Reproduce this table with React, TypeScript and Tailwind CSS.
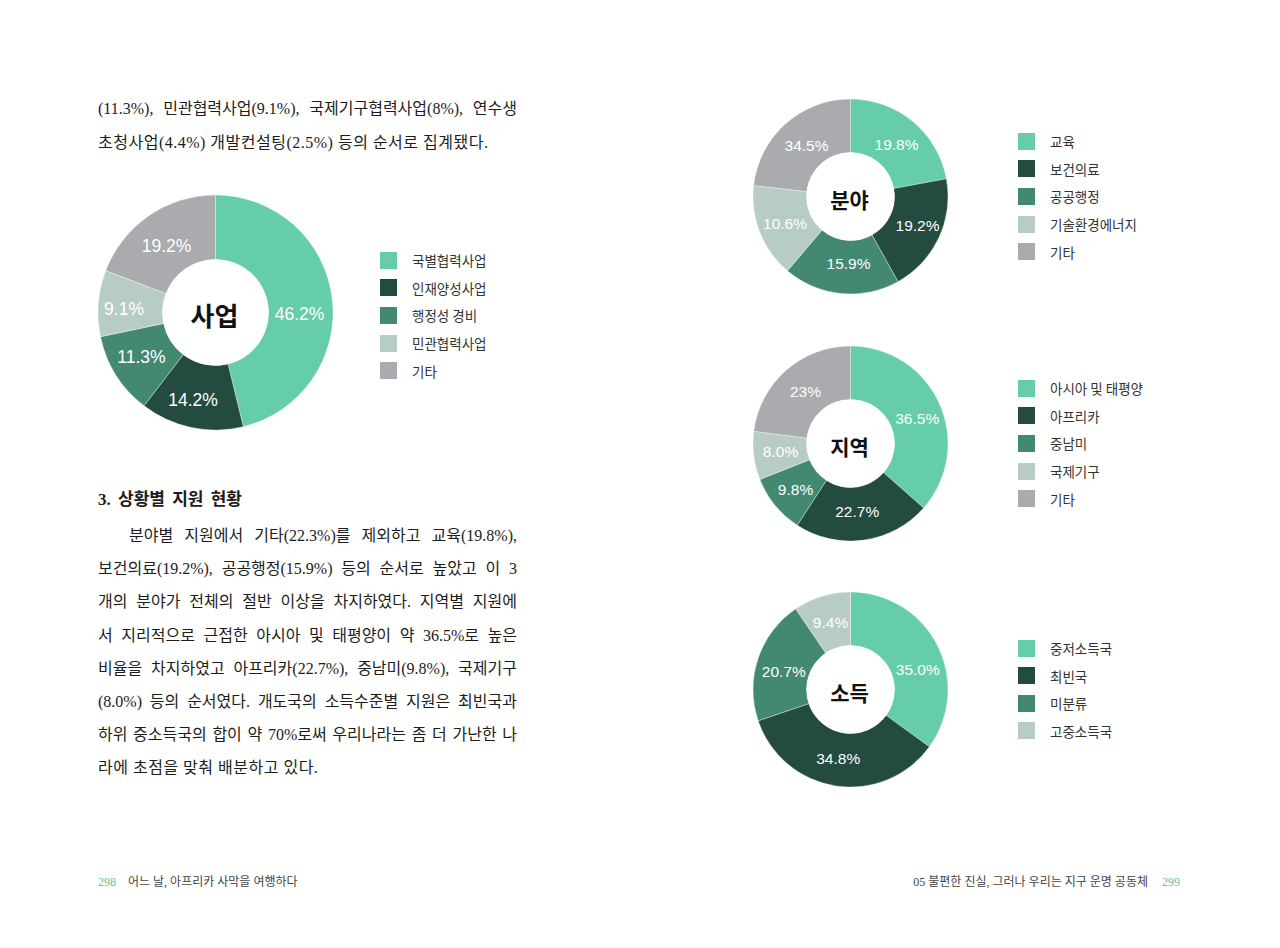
import React from "react"

type Slice = { pct: number; color: string; label: string; dx: number; dy: number }

const C = {
  teal: "#66CDAA",
  dark: "#234B3F",
  mid: "#438871",
  light: "#B8CCC6",
  gray: "#AAABAE",
}

const body = { fontFamily: '"Liberation Serif", "Noto Sans CJK KR", serif' }
const gothic = { fontFamily: '"Noto Sans CJK KR", sans-serif' }

function pt(deg: number, rad: number) {
  const t = (deg * Math.PI) / 180
  return `${(rad * Math.sin(t)).toFixed(2)} ${(-rad * Math.cos(t)).toFixed(2)}`
}

function arc(a0: number, a1: number, R: number, r: number) {
  const large = a1 - a0 > 180 ? 1 : 0
  return `M ${pt(a0, R)} A ${R} ${R} 0 ${large} 1 ${pt(a1, R)} L ${pt(a1, r)} A ${r} ${r} 0 ${large} 0 ${pt(a0, r)} Z`
}

function Donut({
  R,
  r,
  slices,
  title,
  titleSize,
  labelSize,
}: {
  R: number
  r: number
  slices: Slice[]
  title: string
  titleSize: number
  labelSize: number
}) {
  const total = slices.reduce((s, x) => s + x.pct, 0)
  let acc = 0
  const size = R * 2
  return (
    <svg width={size} height={size} viewBox={`${-R} ${-R} ${size} ${size}`} className="shrink-0">
      {slices.map((s, i) => {
        const a0 = acc
        acc += (s.pct / total) * 360
        return <path key={i} d={arc(a0, acc, R, r)} fill={s.color} stroke="#ffffff" strokeWidth={0.5} strokeOpacity={0.7} />
      })}
      <circle r={r} fill="#ffffff" />
      {slices.map((s, i) => (
        <text
          key={i}
          x={s.dx}
          y={s.dy}
          textAnchor="middle"
          dominantBaseline="central"
          fill="#ffffff"
          fontSize={labelSize}
          style={{ fontFamily: '"Liberation Sans", Arial, sans-serif' }}
        >
          {s.label}
        </text>
      ))}
      <text
        x={-1}
        y={2}
        textAnchor="middle"
        dominantBaseline="central"
        fill="#111111"
        fontSize={titleSize}
        fontWeight={700}
        style={gothic}
      >
        {title}
      </text>
    </svg>
  )
}

function Legend({ items, className }: { items: { color: string; name: string }[]; className?: string }) {
  return (
    <div className={className}>
      {items.map((it) => (
        <div key={it.name} className="flex h-[27.6px] items-center gap-[15px]">
          <span className="block h-[17px] w-[17px]" style={{ background: it.color }} />
          <span className="text-[13.5px] text-[#333333]" style={gothic}>
            {it.name}
          </span>
        </div>
      ))}
    </div>
  )
}

const saup: Slice[] = [
  { pct: 46.2, color: C.teal, label: "46.2%", dx: 84, dy: 1 },
  { pct: 14.2, color: C.dark, label: "14.2%", dx: -22.5, dy: 87.5 },
  { pct: 11.3, color: C.mid, label: "11.3%", dx: -74, dy: 44 },
  { pct: 9.1, color: C.light, label: "9.1%", dx: -91.5, dy: -4 },
  { pct: 19.2, color: C.gray, label: "19.2%", dx: -49, dy: -66.5 },
]

const bunya: Slice[] = [
  { pct: 22.1, color: C.teal, label: "19.8%", dx: 46, dy: -52.5 },
  { pct: 19.8, color: C.dark, label: "19.2%", dx: 67, dy: 28.5 },
  { pct: 19.3, color: C.mid, label: "15.9%", dx: -2, dy: 67 },
  { pct: 15.6, color: C.light, label: "10.6%", dx: -65.5, dy: 27 },
  { pct: 23.2, color: C.gray, label: "34.5%", dx: -44, dy: -51.5 },
]

const jiyeok: Slice[] = [
  { pct: 36.5, color: C.teal, label: "36.5%", dx: 66.7, dy: -25 },
  { pct: 22.7, color: C.dark, label: "22.7%", dx: 6.7, dy: 67.5 },
  { pct: 9.8, color: C.mid, label: "9.8%", dx: -55, dy: 45.5 },
  { pct: 8.0, color: C.light, label: "8.0%", dx: -70, dy: 8 },
  { pct: 23, color: C.gray, label: "23%", dx: -45, dy: -52 },
]

const sodeuk: Slice[] = [
  { pct: 35.0, color: C.teal, label: "35.0%", dx: 67.3, dy: -19.7 },
  { pct: 34.8, color: C.dark, label: "34.8%", dx: -12.3, dy: 68.7 },
  { pct: 20.7, color: C.mid, label: "20.7%", dx: -66.7, dy: -18 },
  { pct: 9.5, color: C.light, label: "9.4%", dx: -20, dy: -67 },
]

const justify = "whitespace-nowrap text-justify [text-align-last:justify]"

export default function App() {
  return (
    <div className="flex h-[948px] w-[1280px] bg-white text-[#1c1c1c]">
      {/* left page */}
      <div className="flex w-[640px] flex-col pb-[58px] pl-[98px] pt-[92px]">
        <div className="w-[419px] text-[16px] leading-[34px]" style={body}>
          <div className={justify}>(11.3%), 민관협력사업(9.1%), 국제기구협력사업(8%), 연수생</div>
          <div className="whitespace-nowrap tracking-[0.5px]">초청사업(4.4%) 개발컨설팅(2.5%) 등의 순서로 집계됐다.</div>
        </div>

        <div className="mt-[35px] flex items-center">
          <Donut R={117.5} r={53} slices={saup} title="사업" titleSize={26} labelSize={17.5} />
          <Legend
            className="ml-[47px] mt-[6px]"
            items={[
              { color: C.teal, name: "국별협력사업" },
              { color: C.dark, name: "인재양성사업" },
              { color: C.mid, name: "행정성 경비" },
              { color: C.light, name: "민관협력사업" },
              { color: C.gray, name: "기타" },
            ]}
          />
        </div>

        <h3 className="mt-[55px] text-[17px] font-bold leading-[30px] [word-spacing:3px]" style={body}>
          3. 상황별 지원 현황
        </h3>
        <div className="mt-[4px] w-[419px] text-[16px] leading-[33.2px]" style={body}>
          <div className={`${justify} pl-[31px]`}>분야별 지원에서 기타(22.3%)를 제외하고 교육(19.8%),</div>
          <div className={justify}>보건의료(19.2%), 공공행정(15.9%) 등의 순서로 높았고 이 3</div>
          <div className={justify}>개의 분야가 전체의 절반 이상을 차지하였다. 지역별 지원에</div>
          <div className={justify}>서 지리적으로 근접한 아시아 및 태평양이 약 36.5%로 높은</div>
          <div className={justify}>비율을 차지하였고 아프리카(22.7%), 중남미(9.8%), 국제기구</div>
          <div className={justify}>(8.0%) 등의 순서였다. 개도국의 소득수준별 지원은 최빈국과</div>
          <div className={justify}>하위 중소득국의 합이 약 70%로써 우리나라는 좀 더 가난한 나</div>
          <div className="whitespace-nowrap tracking-[0.5px]">라에 초점을 맞춰 배분하고 있다.</div>
        </div>

        <div className="mt-auto flex items-center gap-[12px] text-[12px] leading-[16px]" style={body}>
          <span className="text-[#5DBF9B]">298</span>
          <span className="text-[#444444]">어느 날, 아프리카 사막을 여행하다</span>
        </div>
      </div>

      {/* right page */}
      <div className="flex w-[640px] flex-col pb-[58px] pr-[100px] pt-[99px]">
        <div className="flex flex-col pl-[113px]">
          <div className="flex items-center">
            <Donut R={97.5} r={44} slices={bunya} title="분야" titleSize={21} labelSize={15.5} />
            <Legend
              className="ml-[70px]"
              items={[
                { color: C.teal, name: "교육" },
                { color: C.dark, name: "보건의료" },
                { color: C.mid, name: "공공행정" },
                { color: C.light, name: "기술환경에너지" },
                { color: C.gray, name: "기타" },
              ]}
            />
          </div>
          <div className="mt-[52px] flex items-center">
            <Donut R={97.5} r={44} slices={jiyeok} title="지역" titleSize={21} labelSize={15.5} />
            <Legend
              className="ml-[70px]"
              items={[
                { color: C.teal, name: "아시아 및 태평양" },
                { color: C.dark, name: "아프리카" },
                { color: C.mid, name: "중남미" },
                { color: C.light, name: "국제기구" },
                { color: C.gray, name: "기타" },
              ]}
            />
          </div>
          <div className="mt-[51px] flex items-center">
            <Donut R={97.5} r={44} slices={sodeuk} title="소득" titleSize={21} labelSize={15.5} />
            <Legend
              className="ml-[70px]"
              items={[
                { color: C.teal, name: "중저소득국" },
                { color: C.dark, name: "최빈국" },
                { color: C.mid, name: "미분류" },
                { color: C.light, name: "고중소득국" },
              ]}
            />
          </div>
        </div>

        <div className="mt-auto flex items-center justify-end gap-[14px] text-[12px] leading-[16px]" style={body}>
          <span className="text-[#444444]">05 불편한 진실, 그러나 우리는 지구 운명 공동체</span>
          <span className="text-[#5DBF9B]">299</span>
        </div>
      </div>
    </div>
  )
}
